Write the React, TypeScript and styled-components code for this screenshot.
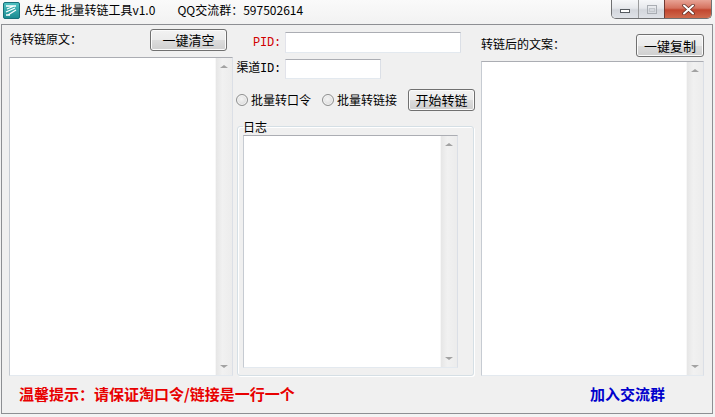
import styled, { createGlobalStyle } from "styled-components";

const GlobalStyle = createGlobalStyle`
  html, body {
    margin: 0;
    padding: 0;
    background: #f4f4f4;
  }
  body {
    font-family: "Noto Sans CJK SC", "Liberation Sans", sans-serif;
    font-size: 12px;
    color: #000;
  }
  * {
    box-sizing: border-box;
  }
`;

const CJK = `"Noto Sans CJK SC", "Liberation Sans", sans-serif`;

const Window = styled.div`
  width: 715px;
  height: 417px;
  display: flex;
  flex-direction: column;
  background: linear-gradient(#fafafa, #f0f0f0 30px, #f3f3f3);
  overflow: hidden;
`;

const TitleBar = styled.div`
  height: 24px;
  display: flex;
  align-items: flex-start;
  padding-left: 3px;
`;

const AppIcon = styled.svg`
  width: 17px;
  height: 17px;
  margin-top: 2px;
  flex-shrink: 0;
`;

const TitleText = styled.span<{ $gap?: number }>`
  font-family: ${CJK};
  font-size: 12px;
  line-height: 18px;
  margin-top: 1px;
  margin-left: ${(p) => p.$gap ?? 5}px;
  white-space: nowrap;
  color: #000;
`;

const Controls = styled.div`
  margin-left: auto;
  margin-right: 3px;
  display: flex;
  height: 19px;
  border: 1px solid #6f7072;
  border-top: none;
  border-radius: 0 0 5px 5px;
  overflow: hidden;
`;

const CtlButton = styled.div<{ $w: number; $close?: boolean }>`
  width: ${(p) => p.$w}px;
  height: 100%;
  display: flex;
  align-items: center;
  justify-content: center;
  border-left: ${(p) => (p.$close ? "1px solid #6f3a33" : "1px solid #9a9b9d")};
  background: ${(p) =>
    p.$close
      ? "linear-gradient(#e8a395 0%, #d5725f 45%, #c2462f 55%, #cf6a4d 100%)"
      : "linear-gradient(#f6f7f9 0%, #e6e8ec 45%, #d3d6dc 55%, #dfe2e7 100%)"};
  &:first-child {
    border-left: none;
  }
`;

const Client = styled.div`
  flex: 1;
  margin: 0 2px 3px 1px;
  border: 1px solid #8d8f93;
  background: #f0f0f0;
  display: flex;
  flex-direction: column;
`;

const Main = styled.div`
  height: 351px;
  display: flex;
  padding-left: 7px;
`;

const Column = styled.div<{ $w: number; $top: number; $ml?: number }>`
  width: ${(p) => p.$w}px;
  margin-left: ${(p) => p.$ml ?? 0}px;
  padding-top: ${(p) => p.$top}px;
  display: flex;
  flex-direction: column;
`;

const PanelHead = styled.div<{ $gap: number; $pr?: number }>`
  display: flex;
  align-items: center;
  justify-content: space-between;
  margin-bottom: ${(p) => p.$gap}px;
  padding-right: ${(p) => p.$pr ?? 0}px;
`;

const Label = styled.span<{ $pl?: number }>`
  font-family: ${CJK};
  font-size: 12px;
  line-height: 14px;
  padding-left: ${(p) => p.$pl ?? 0}px;
  margin-top: -3px;
  white-space: nowrap;
`;

const Button = styled.button<{ $w: number; $h: number }>`
  width: ${(p) => p.$w}px;
  height: ${(p) => p.$h}px;
  padding: 0;
  font-family: ${CJK};
  font-size: 13px;
  line-height: 14px;
  color: #000;
  border: 1px solid #707070;
  border-radius: 3px;
  background: linear-gradient(#f2f2f2 0%, #ebebeb 50%, #dddddd 50%, #cfcfcf 100%);
  box-shadow: inset 0 0 0 1px #fbfbfb;
  flex-shrink: 0;
`;

const TextBox = styled.div`
  flex: 1;
  display: flex;
  background: #fff;
  border: 1px solid;
  border-color: #abadb3 #dbdfe6 #e3e9ef #c6cbd2;
`;

const TextArea = styled.textarea`
  flex: 1;
  min-width: 0;
  border: none;
  outline: none;
  resize: none;
  padding: 2px;
  font-family: ${CJK};
  font-size: 12px;
  background: #fff;
  overflow: hidden;
`;

const ScrollBar = styled.div`
  width: 17px;
  display: flex;
  flex-direction: column;
  background: linear-gradient(to right, #e6e6e6, #f1f1f1 40%, #ececec);
  border-left: 1px solid #f7f7f7;
`;

const ScrollArrow = styled.div<{ $down?: boolean }>`
  height: 17px;
  display: flex;
  align-items: center;
  justify-content: center;
  &::after {
    content: "";
    width: 0;
    height: 0;
    border-left: 4px solid transparent;
    border-right: 4px solid transparent;
    ${(p) =>
      p.$down ? "border-top: 3px solid #a2a2a2;" : "border-bottom: 3px solid #a2a2a2;"}
  }
`;

const ScrollTrack = styled.div`
  flex: 1;
`;

const FieldRow = styled.div<{ $mt?: number; $h: number }>`
  display: flex;
  align-items: center;
  height: ${(p) => p.$h}px;
  margin-top: ${(p) => p.$mt ?? 0}px;
`;

const FieldLabel = styled.span<{ $red?: boolean }>`
  width: 49px;
  text-align: right;
  padding-right: 4px;
  font-family: "Liberation Mono", ${CJK};
  font-size: 12px;
  line-height: 14px;
  color: ${(p) => (p.$red ? "#d00000" : "#000")};
  white-space: nowrap;
  letter-spacing: -0.2px;
`;

const Input = styled.input<{ $w: number }>`
  width: ${(p) => p.$w}px;
  height: 100%;
  border: 1px solid;
  border-color: #abadb3 #dbdfe6 #e3e9ef #e2e3ea;
  background: #fff;
  outline: none;
  padding: 0 3px;
  font-size: 12px;
`;

const RadioItem = styled.label<{ $w: number }>`
  width: ${(p) => p.$w}px;
  display: flex;
  align-items: center;
  gap: 3px;
  font-family: ${CJK};
  font-size: 12px;
  line-height: 14px;
  white-space: nowrap;
`;

const Radio = styled.input`
  appearance: none;
  margin: 0;
  width: 12px;
  height: 12px;
  border-radius: 50%;
  border: 1px solid #8e8f8f;
  background: radial-gradient(circle at 45% 40%, #f4f4f4 0%, #e2e2e2 55%, #cfcfcf 100%);
  box-shadow: inset 0 0 0 1px #f6f6f6;
`;

const Group = styled.fieldset`
  flex: 1;
  min-height: 0;
  margin: 9px 1px 0 1px;
  padding: 2px 15px 7px 5px;
  border: 1px solid #d5dfe5;
  border-radius: 3px;
  box-shadow: inset 1px 1px 0 #fff, 1px 1px 0 #fff;
  display: flex;
  flex-direction: column;
`;

const Legend = styled.legend`
  padding: 0;
  font-family: ${CJK};
  font-size: 12px;
  line-height: 13px;
`;

const Footer = styled.div`
  flex: 1;
  display: flex;
  align-items: center;
  justify-content: space-between;
  padding: 0 47px 2px 17px;
`;

const FooterText = styled.span<{ $color: string }>`
  font-family: ${CJK};
  font-size: 15px;
  font-weight: 700;
  line-height: 18px;
  color: ${(p) => p.$color};
  white-space: nowrap;
  cursor: ${(p) => (p.$color === "#0000cc" ? "pointer" : "default")};
`;

function ScrollText() {
  return (
    <TextBox>
      <TextArea />
      <ScrollBar>
        <ScrollArrow />
        <ScrollTrack />
        <ScrollArrow $down />
      </ScrollBar>
    </TextBox>
  );
}

export default function App() {
  return (
    <>
      <GlobalStyle />
      <Window>
        <TitleBar>
          <AppIcon viewBox="0 0 17 17">
            <defs>
              <linearGradient id="ic" x1="0" y1="0" x2="0" y2="1">
                <stop offset="0" stopColor="#4fc2c2" />
                <stop offset="1" stopColor="#1a8a90" />
              </linearGradient>
            </defs>
            <rect x="0.5" y="0.5" width="16" height="16" rx="1.5" fill="url(#ic)" stroke="#17707a" />
            <path d="M3 4h10M4 7l7-3M3 10l9-4M5 13l8-5M3 13h4" stroke="#fff" strokeWidth="1.3" fill="none" />
          </AppIcon>
          <TitleText>A先生-批量转链工具v1.0</TitleText>
          <TitleText $gap={22}>QQ交流群：597502614</TitleText>
          <Controls>
            <CtlButton $w={26}>
              <svg width="10" height="8" viewBox="0 0 10 8">
                <rect x="0.5" y="4.5" width="9" height="3" fill="#fff" stroke="#555a60" />
              </svg>
            </CtlButton>
            <CtlButton $w={26}>
              <svg width="10" height="9" viewBox="0 0 10 9">
                <rect x="0.5" y="0.5" width="9" height="8" fill="none" stroke="#a9adb3" />
                <rect x="2.5" y="3.5" width="5" height="3" fill="none" stroke="#c2c6cb" />
              </svg>
            </CtlButton>
            <CtlButton $w={47} $close>
              <svg width="13" height="11" viewBox="0 0 13 11">
                <path d="M2 1.5l9 8M11 1.5l-9 8" stroke="#5a2a22" strokeWidth="3.4" strokeLinecap="round" />
                <path d="M2 1.5l9 8M11 1.5l-9 8" stroke="#fff" strokeWidth="2" strokeLinecap="round" />
              </svg>
            </CtlButton>
          </Controls>
        </TitleBar>

        <Client>
          <Main>
            <Column $w={224} $top={4}>
              <PanelHead $gap={6} $pr={6}>
                <Label $pl={1}>待转链原文：</Label>
                <Button $w={77} $h={22}>一键清空</Button>
              </PanelHead>
              <ScrollText />
            </Column>

            <Column $w={239} $top={7} $ml={3}>
              <FieldRow $h={21}>
                <FieldLabel $red>PID:</FieldLabel>
                <Input $w={176} />
              </FieldRow>
              <FieldRow $h={20} $mt={6}>
                <FieldLabel>渠道ID:</FieldLabel>
                <Input $w={96} />
              </FieldRow>
              <FieldRow $h={22} $mt={10}>
                <RadioItem $w={86}>
                  <Radio type="radio" name="mode" />
                  批量转口令
                </RadioItem>
                <RadioItem $w={86}>
                  <Radio type="radio" name="mode" />
                  批量转链接
                </RadioItem>
                <Button $w={67} $h={22}>开始转链</Button>
              </FieldRow>
              <Group>
                <Legend>日志</Legend>
                <ScrollText />
              </Group>
            </Column>

            <Column $w={223} $top={9} $ml={6}>
              <PanelHead $gap={4}>
                <Label>转链后的文案：</Label>
                <Button $w={68} $h={23}>一键复制</Button>
              </PanelHead>
              <ScrollText />
            </Column>
          </Main>

          <Footer>
            <FooterText $color="#e80000">温馨提示：请保证淘口令/链接是一行一个</FooterText>
            <FooterText $color="#0000cc">加入交流群</FooterText>
          </Footer>
        </Client>
      </Window>
    </>
  );
}
